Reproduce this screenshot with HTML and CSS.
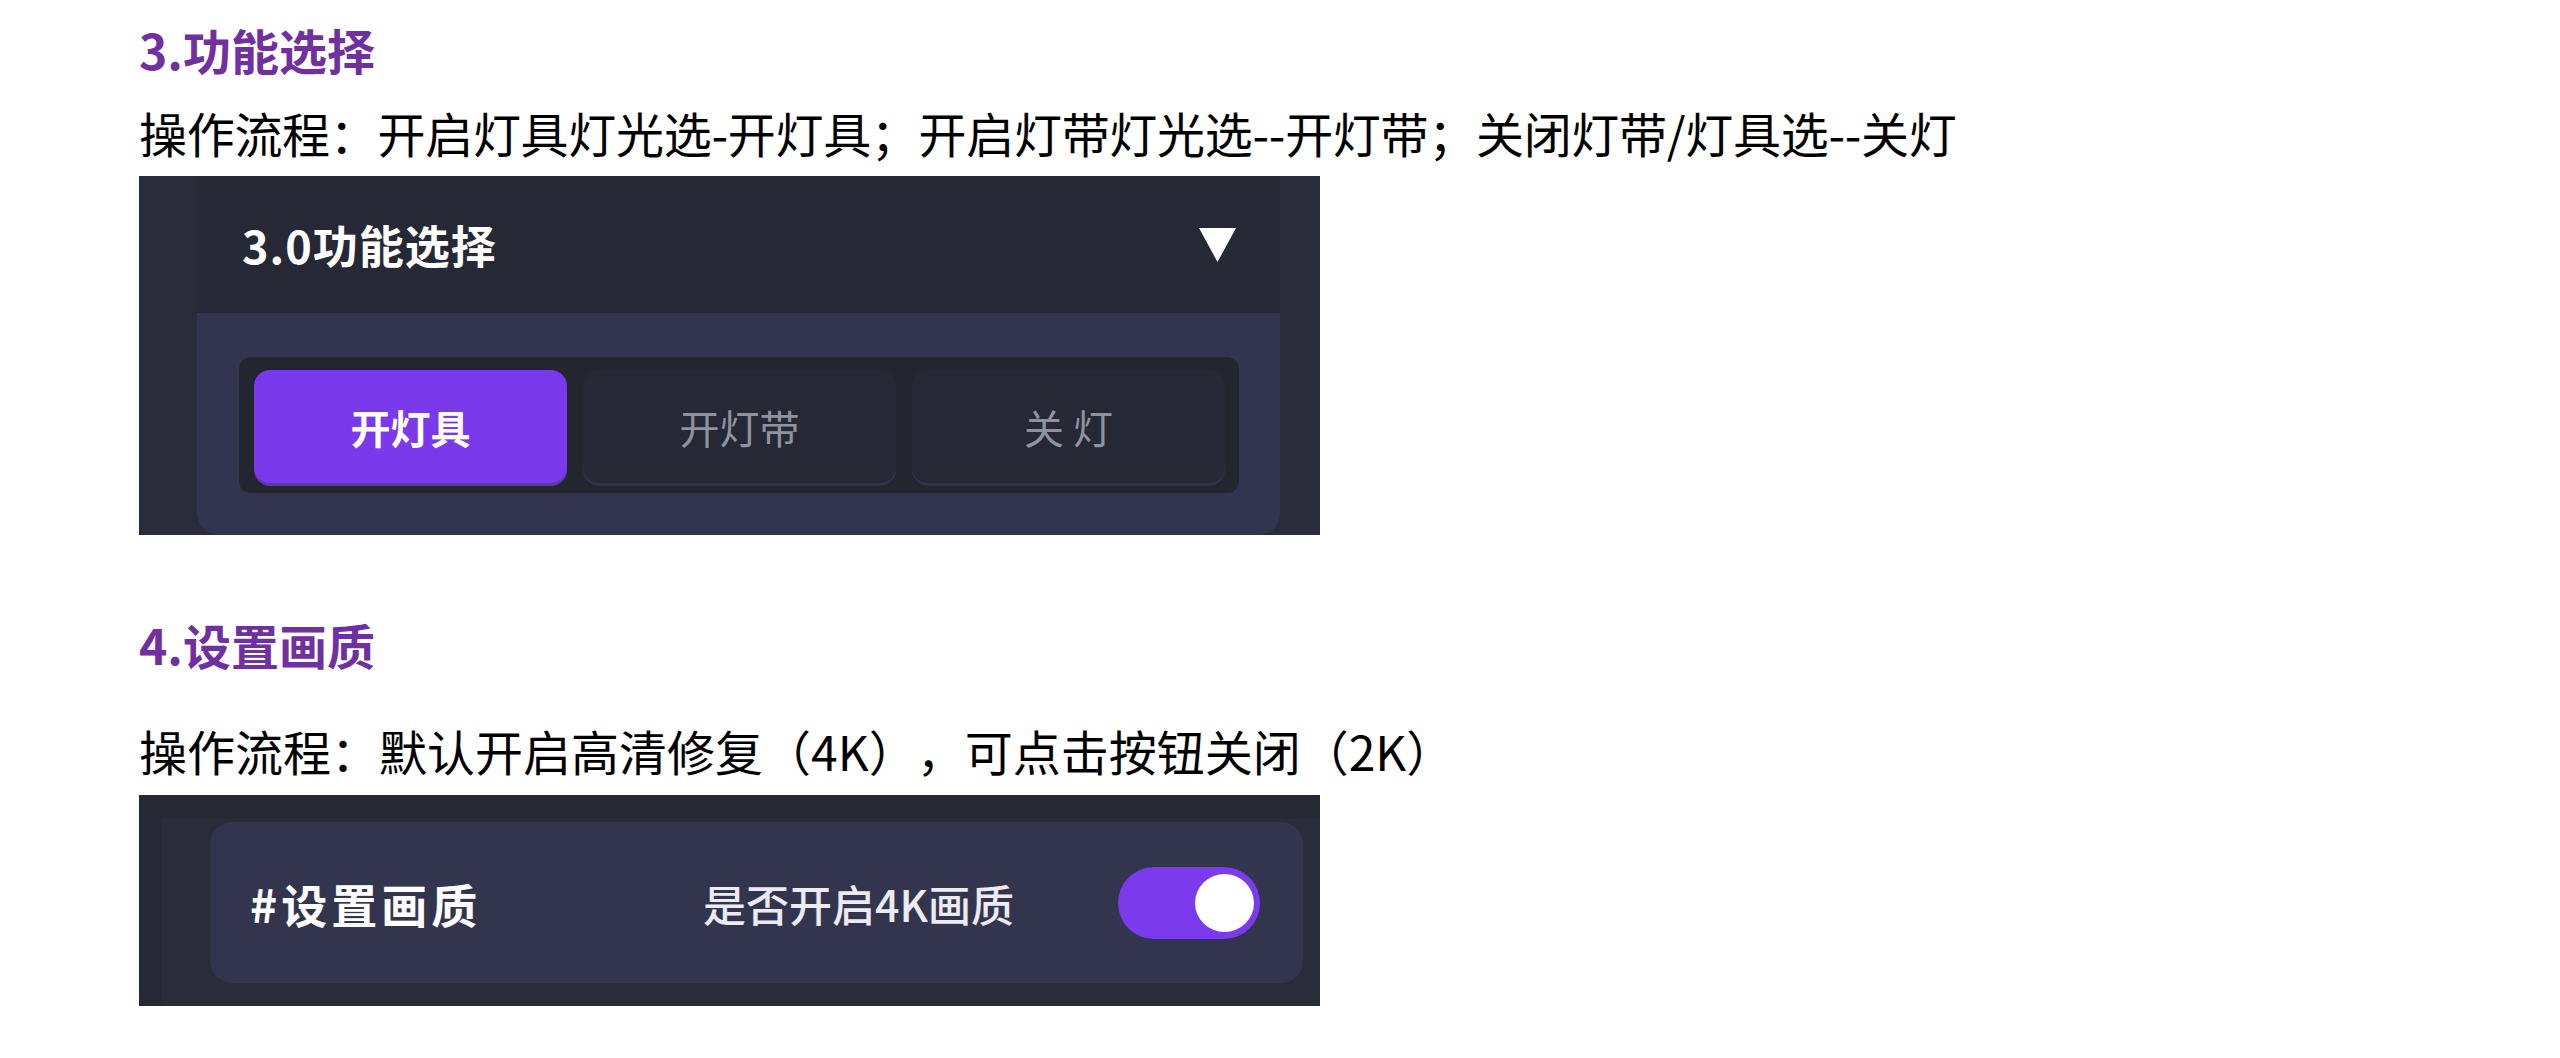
FILE: index.html
```html
<!DOCTYPE html>
<html lang="zh-CN">
<head>
<meta charset="utf-8">
<title>功能说明</title>
<link rel="stylesheet" href="styles.css">
</head>
<body>
<main class="doc">
  <h2 class="sec-title">3.功能选择</h2>
  <p class="sec-text text-first">操作流程：开启灯具灯光选-开灯具；开启灯带灯光选--开灯带；关闭灯带/灯具选--关灯</p>
  <div class="shot shot-func">
    <div class="panel">
      <div class="panel-head">
        <span class="panel-title">3.0功能选择</span>
        <svg class="caret" width="37" height="34" viewBox="0 0 37 34"><polygon points="0,0 37,0 18.5,34" fill="#ffffff"/></svg>
      </div>
      <div class="panel-body">
        <div class="seg">
          <div class="seg-btn active">开灯具</div>
          <div class="seg-btn">开灯带</div>
          <div class="seg-btn">关 灯</div>
        </div>
      </div>
    </div>
  </div>

  <h2 class="sec-title second">4.设置画质</h2>
  <p class="sec-text text-second">操作流程：默认开启高清修复（4K），可点击按钮关闭（2K）</p>
  <div class="shot shot-quality">
    <div class="card">
      <span class="card-title">#设置画质</span>
      <span class="card-label">是否开启4K画质</span>
      <div class="toggle"><span class="knob"></span></div>
    </div>
  </div>
</main>
</body>
</html>
```
FILE: styles.css
```css
html, body {
  margin: 0;
  padding: 0;
  background: #ffffff;
}

.doc {
  padding: 19px 0 0 139px;
  font-family: "Noto Sans CJK SC", "Noto Sans", sans-serif;
  text-spacing-trim: space-all;
}

.sec-title {
  margin: 0 0 23px 0;
  font-size: 48px;
  line-height: 60px;
  font-weight: 700;
  color: #7030a0;
}

.sec-title.second {
  margin-bottom: 46px;
}

.sec-text {
  margin: 0 0 14px 0;
  font-size: 48px;
  line-height: 60px;
  font-weight: 400;
  color: #000000;
  white-space: nowrap;
}

.sec-text.text-first {
  letter-spacing: -0.3px;
}

.sec-text.text-second {
  margin-bottom: 15px;
}

/* ---------- screenshot 1 ---------- */
.shot {
  width: 1181px;
  box-sizing: border-box;
  background: #2a2c3b;
}

.shot-func {
  height: 359px;
  padding: 0 40px 0 58px;
  margin-bottom: 79px;
  overflow: hidden;
  display: flex;
}

.panel {
  flex: 1;
  display: flex;
  flex-direction: column;
}

.panel-head {
  height: 137px;
  background: #262836;
  display: flex;
  align-items: center;
  justify-content: space-between;
  padding: 0 44px 0 45px;
}

.panel-title {
  font-size: 45px;
  font-weight: 700;
  color: #ffffff;
  letter-spacing: 1px;
}

.caret {
  display: block;
}

.panel-body {
  flex: 1;
  background: #333550;
  border-radius: 0 0 22px 22px;
  padding: 44px 41px 0 42px;
}

.seg {
  height: 136px;
  box-sizing: border-box;
  background: #23252f;
  border-radius: 12px;
  padding: 13px 14px 10px 15px;
  display: flex;
  gap: 16px;
}

.seg-btn {
  flex: 1;
  border-radius: 16px;
  background: #262836;
  box-shadow: 0 3px 0 #30324a;
  display: flex;
  align-items: center;
  justify-content: center;
  font-size: 40px;
  color: #8e939e;
}

.seg-btn.active {
  background: #7b39ec;
  color: #ffffff;
  font-weight: 700;
  box-shadow: 0 3px 0 #5a3aa8;
}

/* ---------- screenshot 2 ---------- */
.shot-quality {
  height: 211px;
  padding: 27px 17px 23px 71px;
  background:
    linear-gradient(to bottom, #262834 0, #262834 24px, rgba(38, 40, 52, 0) 24px),
    linear-gradient(to right, #262835 0, #262835 22px, #2a2c3b 22px);
}

.card {
  height: 100%;
  box-sizing: border-box;
  background: #33354f;
  border-radius: 22px;
  display: flex;
  align-items: center;
  padding: 0 43px 0 40px;
}

.card-title {
  font-size: 46px;
  font-weight: 700;
  color: #ffffff;
  letter-spacing: 4px;
}

.card-label {
  margin-left: auto;
  margin-right: 104px;
  font-size: 43px;
  font-weight: 500;
  color: #eceaf2;
}

.toggle {
  width: 142px;
  height: 72px;
  box-sizing: border-box;
  border-radius: 36px;
  background: #7c3aed;
  display: flex;
  align-items: center;
  justify-content: flex-end;
  padding: 0 6px;
}

.knob {
  width: 59px;
  height: 58px;
  border-radius: 50%;
  background: #ffffff;
}
```
